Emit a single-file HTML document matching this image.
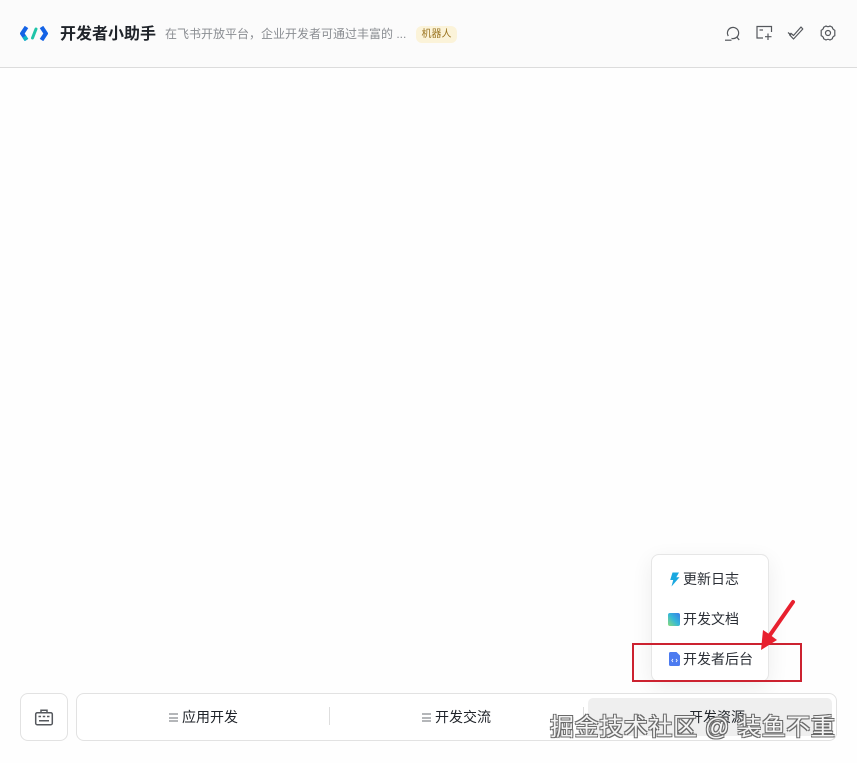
<!DOCTYPE html>
<html lang="zh">
<head>
<meta charset="utf-8">
<style>
html,body{margin:0;padding:0;width:857px;height:763px;overflow:hidden;background:#fefefe;}
body{position:relative;font-family:"Liberation Sans","Noto Sans CJK SC",sans-serif;color:#1f2329;}
.a{position:absolute;white-space:nowrap;}
#hd{left:0;top:0;width:857px;height:67px;background:#fbfbfb;border-bottom:1px solid #dcdcdc;}
.menu{left:651px;top:554px;width:118px;height:128px;background:#fff;border:1px solid #e6e6e6;border-radius:8px;box-shadow:0 6px 22px rgba(0,0,0,.07);box-sizing:border-box;}
.it{font-size:14px;line-height:18px;color:#2b2f36;}
.bar{font-size:14px;line-height:20px;color:#1f2329;}
.lines{position:absolute;width:9px;height:9px;border-top:2px solid #b4b6b9;border-bottom:2px solid #b4b6b9;box-sizing:border-box;}
.lines:after{content:"";position:absolute;left:0;right:0;top:1.5px;height:2px;background:#b4b6b9;}
#wm{left:550px;top:712px;font-size:24px;line-height:32px;color:#f4f4f4;letter-spacing:.6px;text-shadow:-1px -1px 0 #6a6a6a,1px -1px 0 #6a6a6a,-1px 1px 0 #6a6a6a,1px 1px 0 #6a6a6a;}
</style>
</head>
<body>
<div class="a" id="hd"></div>

<svg class="a" style="left:20px;top:26px" width="28" height="15" viewBox="0 0 28 15">
<path d="M6.5 1 L2.2 7.5 L6.5 14" fill="none" stroke="#1463e6" stroke-width="4.2"/>
<path d="M21.5 1 L25.8 7.5 L21.5 14" fill="none" stroke="#1463e6" stroke-width="4.2"/>
<path d="M6.5 14 L4.2 10.6" fill="none" stroke="#0fb5c4" stroke-width="4.2"/>
<path d="M16 3 L12.5 12" fill="none" stroke="#1fc4a8" stroke-width="3" stroke-linecap="round"/>
</svg>
<div class="a" style="left:60px;top:24px;font-size:16px;line-height:22px;font-weight:700;color:#1f2329">开发者小助手</div>
<div class="a" style="left:165px;top:25px;font-size:12px;line-height:18px;color:#8a8d92">在飞书开放平台，企业开发者可通过丰富的 ...</div>
<div class="a" style="left:416px;top:26px;width:41px;height:17px;border-radius:6px;background:#fbf3d9;color:#9a7420;font-size:10px;line-height:17px;text-align:center">机器人</div>

<svg class="a" style="left:722px;top:23px" width="20" height="20" viewBox="0 0 20 20" fill="none" stroke="#55585d" stroke-width="1.2">
<path d="M6.3 13 A5.6 5.6 0 1 1 9.5 15.4 A5.6 5.6 0 0 0 14.8 14"/><path d="M14.8 14 L17.2 17"/><path d="M3 17.2 H9.5"/>
</svg>
<svg class="a" style="left:755px;top:24px" width="19" height="18" viewBox="0 0 19 18" fill="none" stroke="#55585d" stroke-width="1.2">
<path d="M8 14 H2 V2.5 H16.5 V8"/><path d="M4.5 6 H8"/><path d="M13 9.5 V16 M10 12.7 H16.5"/>
</svg>
<svg class="a" style="left:786px;top:24px" width="19" height="18" viewBox="0 0 19 18" fill="none" stroke="#55585d" stroke-width="1.2">
<path d="M2 8.5 L5 11"/><path d="M7.5 15 L16.8 5 L15 3 L7.5 11.5 L5 9.3 L3.6 10.8 Z" stroke-linejoin="round"/>
</svg>
<svg class="a" style="left:819px;top:24px" width="18" height="18" viewBox="0 0 18 18" fill="none" stroke="#55585d" stroke-width="1.2" stroke-linejoin="round">
<path d="M7 2 Q9 3.4 11 2 L13.4 3.3 Q13.4 5.3 15.8 6.3 L15.8 11.7 Q13.4 12.7 13.4 14.7 L11 16 Q9 14.6 7 16 L4.6 14.7 Q4.6 12.7 2.2 11.7 L2.2 6.3 Q4.6 5.3 4.6 3.3 Z"/><circle cx="9" cy="9" r="2.5"/>
</svg>

<div class="a menu"></div>
<svg class="a" style="left:669px;top:572px" width="11" height="15" viewBox="0 0 11 15">
<path d="M3.5 0.5 H10 L7.3 5.2 H10.5 L2.5 14.5 L4.2 8 H1.2 Z" fill="#1aa8e0"/>
</svg>
<div class="a it" style="left:683px;top:570px">更新日志</div>
<svg class="a" style="left:668px;top:613px" width="12" height="13" viewBox="0 0 12 13">
<defs><linearGradient id="g" x1="0" y1="1" x2="1" y2="0"><stop offset="0" stop-color="#8bdc7a"/><stop offset=".5" stop-color="#35b8d8"/><stop offset="1" stop-color="#3a7de8"/></linearGradient></defs>
<rect width="12" height="13" rx="2" fill="url(#g)"/>
</svg>
<div class="a it" style="left:683px;top:610px">开发文档</div>
<svg class="a" style="left:669px;top:652px" width="11" height="14" viewBox="0 0 11 14">
<path d="M1.5 0 H7.5 L11 3.5 V12.5 A1.5 1.5 0 0 1 9.5 14 H1.5 A1.5 1.5 0 0 1 0 12.5 V1.5 A1.5 1.5 0 0 1 1.5 0 Z" fill="#4c7bf0"/>
<path d="M4 7 L2.8 8.5 L4 10 M7 7 L8.2 8.5 L7 10" fill="none" stroke="#fff" stroke-width=".8"/>
</svg>
<div class="a it" style="left:683px;top:650px">开发者后台</div>

<div class="a" style="left:20px;top:693px;width:48px;height:48px;box-sizing:border-box;border:1px solid #e2e2e2;border-radius:8px;background:#fff"></div>
<svg class="a" style="left:34px;top:708px" width="20" height="19" viewBox="0 0 20 19" fill="none" stroke="#55585d" stroke-width="1.5">
<rect x="1.7" y="4.7" width="16.6" height="12" rx="1.5"/><path d="M7 4.5 V2.2 H13 V4.5"/><path d="M4.5 8.5 H7 M8.8 8.5 H11.2 M13 8.5 H15.5 M5 12.8 H15"/>
</svg>
<div class="a" style="left:76px;top:693px;width:761px;height:48px;box-sizing:border-box;border:1px solid #e2e2e2;border-radius:8px;background:#fff"></div>
<div class="a" style="left:329px;top:707px;width:1px;height:18px;background:#dedede"></div>
<div class="a" style="left:583px;top:707px;width:1px;height:18px;background:#dedede"></div>
<div class="a" style="left:588px;top:698px;width:244px;height:38px;border-radius:5px;background:#efefef"></div>

<div class="lines" style="left:169px;top:713px"></div>
<div class="a bar" style="left:182px;top:707px">应用开发</div>
<div class="lines" style="left:422px;top:713px"></div>
<div class="a bar" style="left:435px;top:707px">开发交流</div>
<div class="a bar" style="left:689px;top:707px">开发资源</div>

<div class="a" style="left:632px;top:643px;width:170px;height:39px;box-sizing:border-box;border:2px solid #cc2230"></div>
<svg class="a" style="left:755px;top:598px" width="42" height="56" viewBox="0 0 42 56">
<path d="M38 4 L15 37" stroke="#e8202e" stroke-width="4" stroke-linecap="round" fill="none"/>
<path d="M6 52 L8 32 L14 36 L22 42 Z" fill="#e8202e"/>
</svg>

<div class="a" id="wm">掘金技术社区 @ 装鱼不重</div>
</body>
</html>
